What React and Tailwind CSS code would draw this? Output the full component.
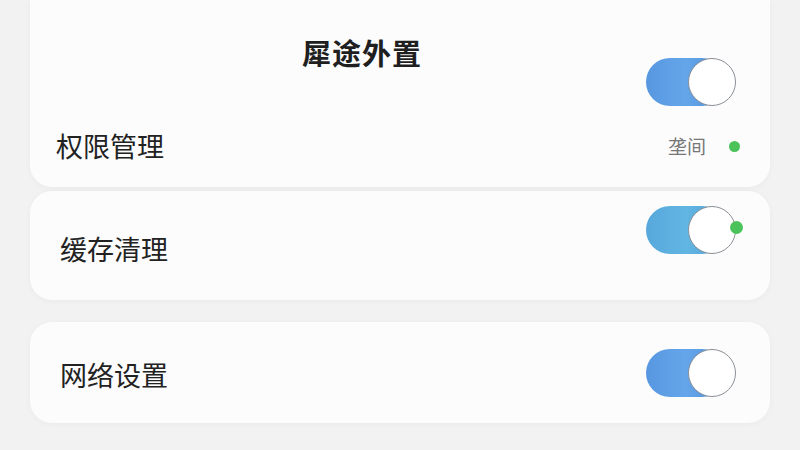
import React from 'react'

const font = { fontFamily: '"Noto Sans CJK SC", "Noto Sans", sans-serif' }

const Toggle = ({ tone = 'blue', dot = false }) => (
  <div className="relative w-[90px] h-[48px]">
    <div
      className={`absolute left-0 top-0 h-[48px] w-[80px] rounded-full ${
        tone === 'teal'
          ? 'bg-gradient-to-r from-[#57a7dc] via-[#62b6e2] to-[#4f9fd6]'
          : 'bg-gradient-to-r from-[#5797e0] via-[#65a6ea] to-[#4b8cd8]'
      }`}
    />
    <div className="absolute right-0 top-0 h-[48px] w-[48px] rounded-full bg-white border-[1.5px] border-[#8a8f96]" />
    {dot && (
      <div className="absolute right-[-7px] top-[15px] h-[13px] w-[13px] rounded-full bg-[#4cc35a]" />
    )}
  </div>
)

const Card = ({ children, className = '' }) => (
  <div className={`mx-[30px] bg-[#fcfcfc] shadow-[0_1px_6px_rgba(0,0,0,0.04)] ${className}`}>
    {children}
  </div>
)

export default function App() {
  return (
    <div className="w-[800px] h-[450px] overflow-hidden bg-[#f2f2f3] text-[#222]" style={font}>
      <Card className="h-[187px] rounded-b-[22px] relative">
        <div className="pt-[32px] flex justify-center pr-[76px]">
          <h1 className="text-[29px] leading-[40px] font-bold tracking-[1px] text-[#1f1f1f]">犀途外置</h1>
        </div>
        <div className="flex justify-end pr-[34px] -mt-[14px]">
          <Toggle />
        </div>
        <div className="flex items-center justify-between pl-[26px] pr-[30px] mt-[22px]">
          <span className="text-[27px] leading-[36px]">权限管理</span>
          <div className="flex items-center gap-[23px]">
            <span className="text-[19px] text-[#777] leading-[26px]">垄间</span>
            <span className="h-[11px] w-[11px] rounded-full bg-[#4cc35a]" />
          </div>
        </div>
      </Card>

      <Card className="mt-[4px] h-[109px] rounded-[22px] flex justify-between pl-[30px] pr-[34px]">
        <span className="text-[27px] leading-[36px] mt-[40px]">缓存清理</span>
        <div className="mt-[15px]">
          <Toggle tone="teal" dot />
        </div>
      </Card>

      <Card className="mt-[22px] h-[101px] rounded-[22px] flex items-center justify-between pl-[30px] pr-[34px]">
        <span className="text-[27px] leading-[36px] mt-[4px]">网络设置</span>
        <Toggle />
      </Card>
    </div>
  )
}
